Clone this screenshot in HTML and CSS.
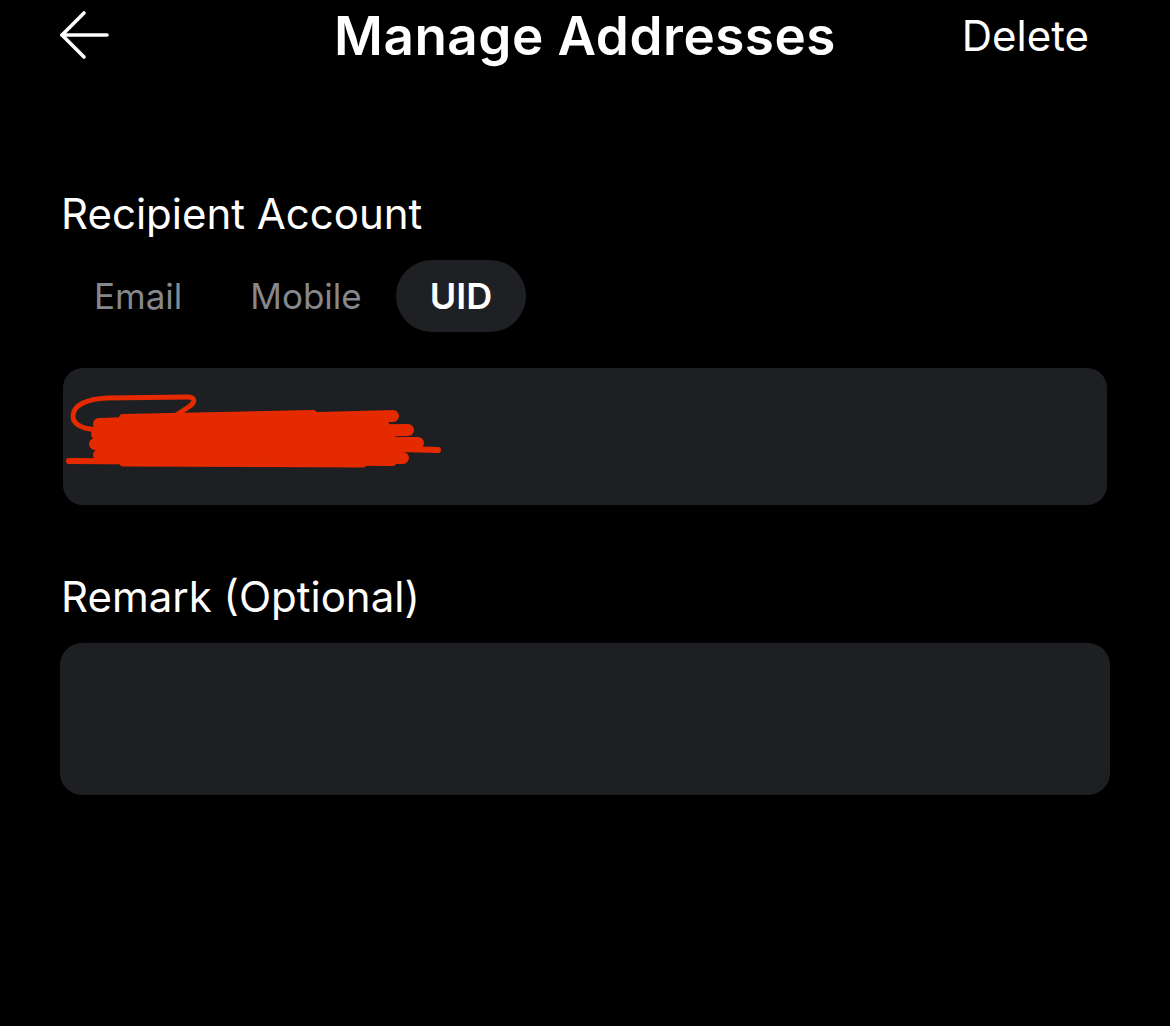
FILE: index.html
```html
<!DOCTYPE html>
<html lang="en">
<head>
<meta charset="utf-8">
<title>Manage Addresses</title>
<link rel="stylesheet" href="styles.css">
</head>
<body>
<div class="page">
  <header class="header">
    <div class="back">
      <svg class="back-icon" width="50" height="50" viewBox="0 0 50 50" fill="none" stroke="#fff" stroke-width="3.6" stroke-linecap="round" stroke-linejoin="round">
        <path d="M3 25 H48"/>
        <path d="M25 3 L3 25 L25 47"/>
      </svg>
    </div>
    <h1 class="title">Manage Addresses</h1>
    <div class="action">Delete</div>
  </header>

  <section class="form">
    <div class="label label-recipient">Recipient Account</div>
    <div class="tabs">
      <div class="tab">Email</div>
      <div class="tab">Mobile</div>
      <div class="tab tab-active">UID</div>
    </div>
    <div class="field field-account">
      <svg class="scribble" width="400" height="110" viewBox="0 0 400 110" fill="none" stroke="#e52a00" stroke-linecap="round" stroke-linejoin="round">
        <path d="M42 62 C22 62 10 58 10 48 C10 37 24 31 44 30 L124 29 C133 29 132 34 127 38 L100 56" stroke-width="5"/>
        <polygon points="40,50 120,48 230,46 320,48 330,60 338,88 300,96 150,97 40,95 35,70" fill="#e52a00" stroke="none"/>
        <path d="M36 56 L330 48" stroke-width="12"/>
        <path d="M60 50 L250 46" stroke-width="8"/>
        <path d="M34 66 L345 62" stroke-width="12"/>
        <path d="M32 76 L355 75" stroke-width="12"/>
        <path d="M36 87 L340 90" stroke-width="12"/>
        <path d="M6 93 L330 95" stroke-width="6"/>
        <path d="M300 80 L375 82" stroke-width="6"/>
        <path d="M285 49 L328 48" stroke-width="7"/>
        <path d="M60 95 L300 96" stroke-width="7"/>
      </svg>
    </div>

    <div class="label label-remark">Remark (Optional)</div>
    <div class="field field-remark"></div>
  </section>
</div>
</body>
</html>
```

FILE: styles.css
```css
* {
  box-sizing: border-box;
}

html, body {
  margin: 0;
  padding: 0;
  background: #000;
}

body {
  font-family: Inter, "Noto Sans", "Liberation Sans", sans-serif;
  color: #fff;
  width: 1170px;
  height: 1026px;
  overflow: hidden;
}

.header {
  display: grid;
  grid-template-columns: 1fr auto 1fr;
  align-items: center;
  height: 73px;
  padding: 0 59px;
}

.back {
  display: flex;
  align-items: center;
  margin-top: -3px;
}

.back-icon {
  display: block;
}

.title {
  margin: 0;
  font-size: 53px;
  font-weight: 600;
  line-height: 1.21;
  letter-spacing: 0.5px;
  text-align: center;
}

.action {
  justify-self: end;
  padding-right: 22px;
  font-size: 42px;
  font-weight: 400;
  line-height: 1.21;
}

.form {
  display: flex;
  flex-direction: column;
  padding: 0 60px;
}

.label {
  font-size: 42px;
  font-weight: 400;
  line-height: 48px;
}

.label-recipient {
  margin-top: 117px;
  padding-left: 1px;
}

.tabs {
  display: flex;
  margin-top: 22px;
}

.tab {
  height: 72px;
  display: flex;
  align-items: center;
  padding: 0 34px;
  border-radius: 36px;
  font-size: 35px;
  color: #86888c;
}

.tab-active {
  background: #1f2023;
  color: #fff;
  font-weight: 600;
  font-size: 36px;
}

.field {
  background: #1e1f23;
  position: relative;
}

.field-account {
  margin: 36px 3px 0 3px;
  height: 137px;
  border-radius: 20px;
}

.scribble {
  position: absolute;
  left: 0;
  top: 0;
}

.label-remark {
  margin-top: 68px;
  padding-left: 1px;
  font-size: 42px;
}

.field-remark {
  margin: 22px 0 0 0;
  height: 152px;
  border-radius: 22px;
}
```
